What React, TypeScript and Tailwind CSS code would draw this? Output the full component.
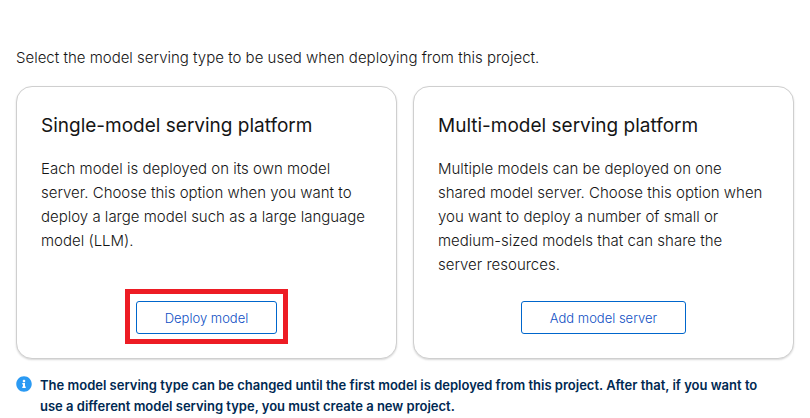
import type { ReactNode } from "react";
import { FaInfoCircle } from "react-icons/fa";

type PlatformCardProps = {
  title: string;
  description: string;
  action: string;
  highlighted?: boolean;
};

function ActionButton({ children }: { children: ReactNode }) {
  return (
    <button
      type="button"
      className="h-[33px] rounded-[3px] border border-[#0066cc] bg-white px-7 text-[13px] leading-5 font-light text-[#0f4fc4]"
    >
      {children}
    </button>
  );
}

function PlatformCard({ title, description, action, highlighted = false }: PlatformCardProps) {
  return (
    <article className="flex flex-col rounded-2xl border border-[#cfcfcf] bg-white px-6 pt-6 pb-6 shadow-[0_1px_2px_rgba(0,0,0,0.16)]">
      <h2 className="text-[19px] leading-[30px] font-normal text-[#151515]">{title}</h2>
      <p className="mt-4 mb-6 text-[15px] leading-6 font-light">{description}</p>
      <div className="mt-auto flex justify-center">
        <div className="relative">
          <ActionButton>{action}</ActionButton>
          {highlighted && (
            <div className="pointer-events-none absolute -inset-x-[11px] -top-3 -bottom-[10px] border-[5px] border-[#ed1c24]" />
          )}
        </div>
      </div>
    </article>
  );
}

export default function App() {
  return (
    <main className="bg-white px-4 pt-[46px] font-['Inter','Liberation_Sans',sans-serif] text-[#151515]">
      <p className="text-[15px] leading-6 font-light">
        Select the model serving type to be used when deploying from this project.
      </p>
      <section className="mt-4 grid grid-cols-2 gap-4">
        <PlatformCard
          title="Single-model serving platform"
          description="Each model is deployed on its own model server. Choose this option when you want to deploy a large model such as a large language model (LLM)."
          action="Deploy model"
          highlighted
        />
        <PlatformCard
          title="Multi-model serving platform"
          description="Multiple models can be deployed on one shared model server. Choose this option when you want to deploy a number of small or medium-sized models that can share the server resources."
          action="Add model server"
        />
      </section>
      <div className="mt-4 flex gap-2 pr-6 text-[#002952]">
        <FaInfoCircle className="mt-px size-4 shrink-0 text-[#2b9af3]" aria-hidden="true" />
        <p className="text-[13px] leading-[21px] font-semibold">
          The model serving type can be changed until the first model is deployed from this project. After that, if you want to use a different model serving type, you must create a new project.
        </p>
      </div>
    </main>
  );
}
